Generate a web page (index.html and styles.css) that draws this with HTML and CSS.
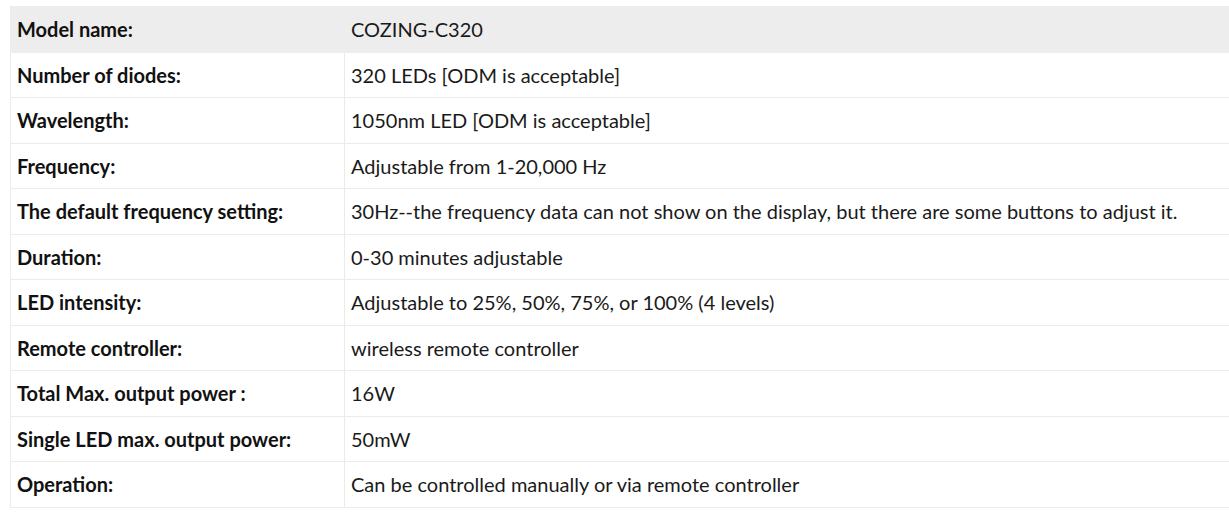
FILE: index.html
```html
<!DOCTYPE html>
<html>
<head>
<meta charset="utf-8">
<link rel="stylesheet" href="styles.css">
</head>
<body>
<table class="spec">
  <tbody>
    <tr class="head"><td class="label">Model name:</td><td class="value">COZING-C320</td></tr>
    <tr><td class="label">Number of diodes:</td><td class="value">320 LEDs [ODM is acceptable]</td></tr>
    <tr><td class="label">Wavelength:</td><td class="value">1050nm LED [ODM is acceptable]</td></tr>
    <tr><td class="label">Frequency:</td><td class="value">Adjustable from 1-20,000 Hz</td></tr>
    <tr><td class="label">The default frequency setting:</td><td class="value">30Hz--the frequency data can not show on the display, but there are some buttons to adjust it.</td></tr>
    <tr><td class="label">Duration:</td><td class="value">0-30 minutes adjustable</td></tr>
    <tr><td class="label">LED intensity:</td><td class="value">Adjustable to 25%, 50%, 75%, or 100% (4 levels)</td></tr>
    <tr><td class="label">Remote controller:</td><td class="value">wireless remote controller</td></tr>
    <tr><td class="label">Total Max. output power :</td><td class="value">16W</td></tr>
    <tr><td class="label">Single LED max. output power:</td><td class="value">50mW</td></tr>
    <tr><td class="label">Operation:</td><td class="value">Can be controlled manually or via remote controller</td></tr>
  </tbody>
</table>
</body>
</html>
```
FILE: styles.css
```css
html, body {
  margin: 0;
  padding: 0;
  background: #ffffff;
  overflow: hidden;
}
body {
  padding: 6px 0 0 10px;
  font-family: Lato, "Open Sans", sans-serif;
  font-size: 20px;
  color: #1a1a1a;
}
.spec {
  border-collapse: collapse;
  width: 1240px;
  table-layout: fixed;
}
.spec td {
  border: 1px solid #ebebeb;
  padding: 0 6px;
  height: 45.5px;
  line-height: 28px;
  vertical-align: middle;
  box-sizing: border-box;
}
.spec .label {
  width: 334px;
  font-weight: bold;
  color: #111111;
}
.spec .value {
  color: #1a1a1a;
}
.spec .head td {
  background: #ededed;
  border-color: #ededed;
}
```
